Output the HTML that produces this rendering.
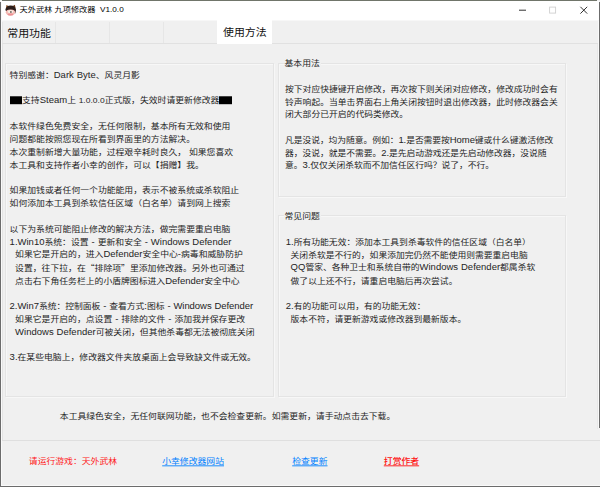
<!DOCTYPE html>
<html lang="zh-CN">
<head>
<meta charset="utf-8">
<title>天外武林 九项修改器 V1.0.0</title>
<style>
html,body{margin:0;padding:0;}
body{width:600px;height:487px;overflow:hidden;background:#f0f0f0;position:relative;
 font-family:"Liberation Sans","Noto Sans CJK SC",sans-serif;color:#242424;font-size:8.83px;font-weight:400;}
.abs{position:absolute;}
#titlebar{left:1px;top:1px;width:598px;height:19px;background:#fff;}
#title{left:19.5px;top:0px;height:20px;line-height:20px;font-size:8.2px;white-space:nowrap;color:#000;word-spacing:0px;font-weight:400;}
.tabsep{top:22px;width:1px;height:21px;background:#e6e6e6;}
.tab{top:19.6px;height:24px;line-height:24px;font-size:10.9px;white-space:nowrap;color:#111;}
#tabsel{left:217px;top:20px;width:55.3px;height:23.6px;background:#fff;}
#paneline{left:1px;top:43px;width:598px;height:1px;background:#e1e1e1;}
.panel{border:1px solid #e4e4e4;box-sizing:border-box;box-shadow:1px 1px 0 #f7f7f7, inset 1px 1px 0 #f7f7f7;}
pre{transform:scaleY(0.88);transform-origin:0 0;margin:0;font-family:inherit;font-size:8.83px;white-space:pre;word-spacing:0.3px;}
.blk{display:inline-block;width:12.4px;height:9.6px;background:#000;color:#000;overflow:hidden;vertical-align:-1.2px;line-height:9.6px;}
.l{font-size:9.5px;}
.q{font-family:"Noto Sans CJK SC",sans-serif;}
.ind{display:inline-block;}
.sq{transform:scaleY(0.88);transform-origin:0 50%;}
.legend{background:#f0f0f0;padding:0 1px;line-height:12px;height:12px;white-space:nowrap;}
.link{white-space:nowrap;text-decoration:underline;line-height:12px;text-underline-offset:1.9px;}
</style>
</head>
<body>
<div class="abs" id="titlebar"></div>
<div class="abs" style="left:0;top:20px;width:600px;height:1px;background:#f7f7f7;"></div>
<!-- app icon -->
<svg class="abs" style="left:0;top:0" width="24" height="20" viewBox="0 0 24 20">
 <path d="M6 8.6 L6.4 4.9 L9 6.2 Z" fill="#8a4a1c"/>
 <path d="M15.6 8.6 L14.9 4.8 L12.4 6.2 Z" fill="#6e3a18"/>
 <ellipse cx="10.7" cy="9.6" rx="5.2" ry="4" fill="#2b1d19"/>
 <path d="M14.2 8 Q16.6 10.5 15.2 13.4 L13.6 12.6 Z" fill="#2b1d19"/>
 <ellipse cx="10.5" cy="12.2" rx="4.7" ry="3.5" fill="#f3b9b4"/>
 <ellipse cx="10.6" cy="11.6" rx="2.9" ry="1.7" fill="#f6efe4"/>
 <path d="M5.9 10.6 Q10.6 8.6 15.3 10.6 L15.3 9 Q10.6 6.8 5.9 9 Z" fill="#2b1d19"/>
 <ellipse cx="10.9" cy="12" rx="0.9" ry="0.8" fill="#3a2a26"/>
 <ellipse cx="10.4" cy="14.6" rx="2.8" ry="1" fill="#ee8f92"/>
</svg>
<div class="abs sq" id="title">天外武林 九项修改器&nbsp; V1.0.0</div>
<!-- window buttons -->
<svg class="abs" style="left:510px;top:0px" width="90" height="20" viewBox="0 0 90 20">
 <path d="M9 10.2 H16" stroke="#1a1a1a" stroke-width="0.9" fill="none"/>
 <rect x="39.6" y="7.1" width="6" height="6" stroke="#cfcfcf" stroke-width="0.9" fill="none"/>
 <path d="M70.4 6.8 L77.2 13.6 M77.2 6.8 L70.4 13.6" stroke="#1a1a1a" stroke-width="0.9" fill="none"/>
</svg>

<div class="abs" id="paneline"></div>
<div class="abs" id="tabsel"></div>
<div class="abs tabsep" style="left:55px"></div>
<div class="abs tabsep" style="left:109px"></div>
<div class="abs tabsep" style="left:163px"></div>
<div class="abs tabsep" style="left:2px"></div>
<div class="abs tab" style="left:7.3px;top:20.7px;transform:scaleY(0.94)">常用功能</div>
<div class="abs tab" style="left:223px;top:19.6px;transform:scaleY(0.93)">使用方法</div>

<!-- left panel -->
<div class="abs panel" style="left:5px;top:63px;width:269px;height:334px;"></div>
<pre class="abs" style="left:9.6px;top:69.0px;line-height:14.59090909090909px;">特别感谢：<span class="l">Dark Byte</span>、风灵月影

<span class="blk">■■</span>支持<span class="l">Steam</span>上<span class="l" style="font-size:8.5px"> 1.0.0.0</span>正式版，失效时请更新修改器<span class="blk">■■</span>

本软件绿色免费安全，无任何限制，基本所有无效和使用
问题都能按照您现在所看到界面里的方法解决。
本次重制新增大量功能，过程艰辛耗时良久， 如果您喜欢
本工具和支持作者小幸的创作，可以【捐赠】我。

如果加钱或者任何一个功能能用，表示不被系统或杀软阻止
如何添加本工具到杀软信任区域（白名单）请到网上搜索

以下为系统可能阻止修改的解决方法，做完需要重启电脑
<span class="l">1.Win10</span>系统：设置<span class="l"> - </span>更新和安全<span class="l"> - Windows Defender</span>
  如果它是开启的，进入<span class="l">Defender</span>安全中心<span class="l">-</span>病毒和威胁防护
  设置，往下拉，在<span class="q">“</span>排除项<span class="q">”</span>里添加修改器。另外也可通过
  点击右下角任务栏上的小盾牌图标进入<span class="l">Defender</span>安全中心

<span style="letter-spacing:-0.05px"><span class="l">2.Win7</span>系统：控制面板<span class="l"> - </span>查看方式<span class="l">:</span>图标<span class="l"> - Windows Defender</span></span>
  如果它是开启的，点设置<span class="l"> - </span>排除的文件<span class="l"> - </span>添加我并保存更改
  <span class="l">Windows Defender</span>可被关闭，但其他杀毒都无法被彻底关闭

<span class="l">3.</span>在某些电脑上，修改器文件夹放桌面上会导致缺文件或无效。</pre>

<!-- right top group -->
<div class="abs panel" style="left:278px;top:63px;width:288px;height:134px;"></div>
<div class="abs legend" style="left:283.5px;top:57.0px;"><span class="sq" style="display:inline-block">基本用法</span></div>
<pre class="abs" style="font-size:8.8px;left:285px;top:82.8px;line-height:14.568181818181818px;">按下对应快捷键开启修改，再次按下则关闭对应修改，修改成功时会有
铃声响起。当单击界面右上角关闭按钮时退出修改器，此时修改器会关
闭大部分已开启的代码类修改。

<span style="letter-spacing:-0.075px">凡是没说，均为随意。例如：<span class="l">1.</span>是否需要按<span class="l">Home</span>键或什么键激活修改</span>
<span style="letter-spacing:-0.05px">器，没说，就是不需要。<span class="l">2.</span>是先启动游戏还是先启动修改器，没说随</span>
<span style="letter-spacing:-0.05px">意。<span class="l">3.</span>仅仅关闭杀软而不加信任区行吗？说了，不行。</span></pre>

<!-- right bottom group -->
<div class="abs panel" style="left:278px;top:215px;width:288px;height:182px;"></div>
<div class="abs legend" style="left:283.5px;top:210.1px;"><span class="sq" style="display:inline-block">常见问题</span></div>
<pre class="abs" style="font-size:8.79px;left:285.8px;top:235.7px;line-height:14.624999999999998px;"><span class="l">1.</span>所有功能无效：添加本工具到杀毒软件的信任区域（白名单）
<span class="ind" style="width:4.8px"></span>关闭杀软是不行的，如果添加完仍然不能使用则需要重启电脑
<span class="ind" style="width:4.8px"></span><span class="l">QQ</span>管家、各种卫士和系统自带的<span class="l">Windows Defender</span>都属杀软
<span class="ind" style="width:4.8px"></span>做了以上还不行，请重启电脑后再次尝试。

<span class="l">2.</span>有的功能可以用，有的功能无效：
<span class="ind" style="width:4.8px"></span>版本不符，请更新游戏或修改器到最新版本。</pre>

<div class="abs sq" style="left:59.8px;top:410.0px;line-height:12px;white-space:nowrap;">本工具绿色安全，无任何联网功能，也不会检查更新。如需更新，请手动点击去下载。</div>

<div class="abs" style="left:1px;top:440px;width:599px;height:1px;background:#dfdfdf;"></div>
<div class="abs" style="left:2px;top:44px;width:1px;height:396px;background:#e4e4e4;"></div>
<div class="abs" style="left:597px;top:44px;width:1px;height:385px;background:#e8e8e8;"></div>

<div class="abs sq" style="left:28.8px;top:455.4px;line-height:12px;white-space:nowrap;color:#ff2020;font-weight:400;">请运行游戏：天外武林</div>
<div class="abs link sq" style="left:162.2px;top:455.4px;color:#0080ff;">小幸修改器网站</div>
<div class="abs link sq" style="left:292.2px;top:455.4px;color:#0080ff;">检查更新</div>
<div class="abs link sq" style="left:383.8px;top:455.4px;color:#ff1010;font-weight:500;">打赏作者</div>

<!-- window frame -->
<div class="abs" style="left:2px;top:0;width:595px;height:1px;background:#70756a;"></div>
<div class="abs" style="left:0;top:2px;width:1px;height:485px;background:#6c6c6c;"></div>
<div class="abs" style="left:1px;top:2px;width:1px;height:484px;background:#fafafa;"></div>
<div class="abs" style="left:599px;top:2px;width:1px;height:426px;background:#6c6c6c;"></div>
<div class="abs" style="left:598px;top:21px;width:1px;height:407px;background:#fafafa;"></div>
<div class="abs" style="left:0;top:486px;width:600px;height:1px;background:#6c6c6c;"></div>
<div class="abs" style="left:1px;top:485px;width:599px;height:1px;background:#fafafa;"></div>
</body>
</html>
